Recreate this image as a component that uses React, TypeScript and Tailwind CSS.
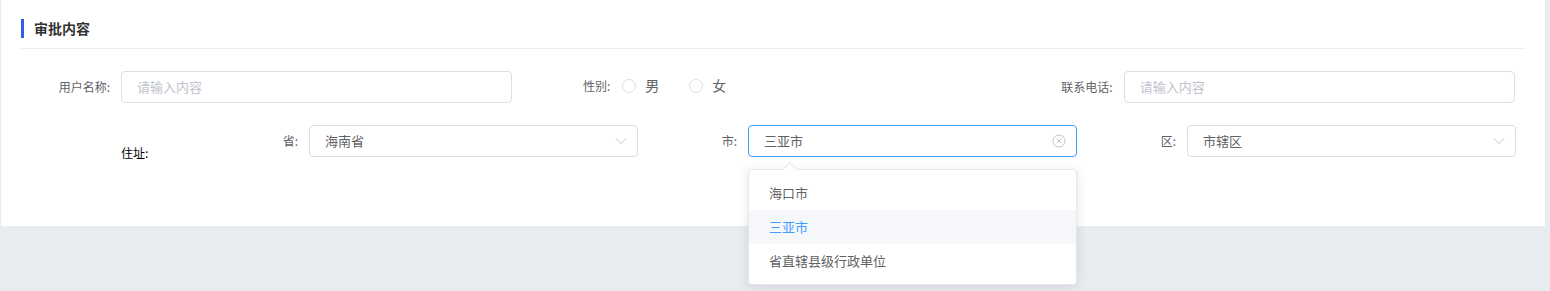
import { useState } from 'react';

const font = { fontFamily: "'Noto Sans CJK SC', 'Noto Sans', sans-serif" };

function ChevronDown() {
  return (
    <svg width="12" height="12" viewBox="0 0 12 12" fill="none" className="text-[#c0c4cc]">
      <path d="M1 3.5 L6 8.5 L11 3.5" stroke="currentColor" strokeWidth="1" />
    </svg>
  );
}

function ClearIcon() {
  return (
    <svg width="14" height="14" viewBox="0 0 14 14" fill="none" className="text-[#c0c4cc]">
      <circle cx="7" cy="7" r="6" stroke="currentColor" strokeWidth="1" />
      <path d="M4.8 4.8 L9.2 9.2 M9.2 4.8 L4.8 9.2" stroke="currentColor" strokeWidth="1" />
    </svg>
  );
}

function TextInput({ placeholder }: { placeholder: string }) {
  return (
    <div className="flex h-[32px] w-[391px] items-center rounded border border-[#dcdfe6] bg-white px-[15px] text-[13px] text-[#c0c4cc]">
      {placeholder}
    </div>
  );
}

function Select({ value, focused, children }: { value: string; focused?: boolean; children?: React.ReactNode }) {
  return (
    <div className="relative w-[329px]">
      <div
        className={`flex h-[32px] items-center justify-between rounded border bg-white pl-[15px] pr-[10px] text-[13px] text-[#606266] ${
          focused ? 'border-[#409eff]' : 'border-[#dcdfe6]'
        }`}
      >
        <span>{value}</span>
        {focused ? <ClearIcon /> : <ChevronDown />}
      </div>
      {children}
    </div>
  );
}

export default function App() {
  const [gender, setGender] = useState<string | null>(null);
  const cities = ['海口市', '三亚市', '省直辖县级行政单位'];

  return (
    <div className="flex h-[291px] w-[1550px] bg-[#e8ecf0] pl-[1px]" style={font}>
      <div className="h-[226px] w-[1544px] bg-white px-[20px] pt-[19px]">
        <div className="flex h-[30px] items-start border-b border-[#ebeef5]">
          <div className="flex h-[19px] items-center">
            <div className="h-[19px] w-[3px] bg-[#2f5df0]" />
            <span className="ml-[10px] text-[14px] font-bold leading-[19px] text-[#333333]">审批内容</span>
          </div>
        </div>

        <div className="mt-[22px] grid grid-cols-3">
          <div className="flex items-center">
            <label className="w-[100px] pr-[11px] text-right text-[12px] text-[#606266]">用户名称:</label>
            <TextInput placeholder="请输入内容" />
          </div>
          <div className="flex h-[32px] items-start">
            <label className="w-[100px] pr-[12px] pt-[6px] text-right text-[12px] text-[#606266]">性别:</label>
            {['男', '女'].map((g) => (
              <button
                key={g}
                onClick={() => setGender(g)}
                className="mr-[30px] flex items-center pt-[4px] text-[14px] text-[#606266]"
              >
                <span
                  className={`h-[14px] w-[14px] rounded-full border ${
                    gender === g ? 'border-[4px] border-[#409eff]' : 'border-[#dcdfe6]'
                  }`}
                />
                <span className="ml-[9px]">{g}</span>
              </button>
            ))}
          </div>
          <div className="flex items-center">
            <label className="w-[100px] pr-[11px] text-right text-[12px] text-[#606266]">联系电话:</label>
            <TextInput placeholder="请输入内容" />
          </div>
        </div>

        <div className="mt-[22px] flex">
          <div className="w-[100px]" />
          <div className="flex h-[37px] w-[78px] items-end text-[12px] text-black">住址:</div>
          {[
            { label: '省:', value: '海南省' },
            { label: '市:', value: '三亚市', focused: true },
            { label: '区:', value: '市辖区' },
          ].map((item) => (
            <div key={item.label} className="flex w-[439px] items-center self-start">
              <label className="w-[110px] pr-[11px] text-right text-[12px] text-[#606266]">{item.label}</label>
              <Select value={item.value} focused={item.focused}>
                {item.focused && (
                  <div className="absolute left-0 top-[44px] z-10 w-[329px] rounded border border-[#e4e7ed] bg-white py-[6px] shadow-[0_2px_12px_rgba(0,0,0,0.1)]">
                    <div className="absolute -top-[6px] left-[36px] h-[10px] w-[10px] rotate-45 border-l border-t border-[#e4e7ed] bg-white" />
                    {cities.map((c) => (
                      <div
                        key={c}
                        className={`relative flex h-[34px] items-center px-[20px] text-[13px] ${
                          c === item.value ? 'bg-[#f5f7fa] text-[#409eff]' : 'text-[#606266]'
                        }`}
                      >
                        {c}
                      </div>
                    ))}
                  </div>
                )}
              </Select>
            </div>
          ))}
        </div>
      </div>
    </div>
  );
}
